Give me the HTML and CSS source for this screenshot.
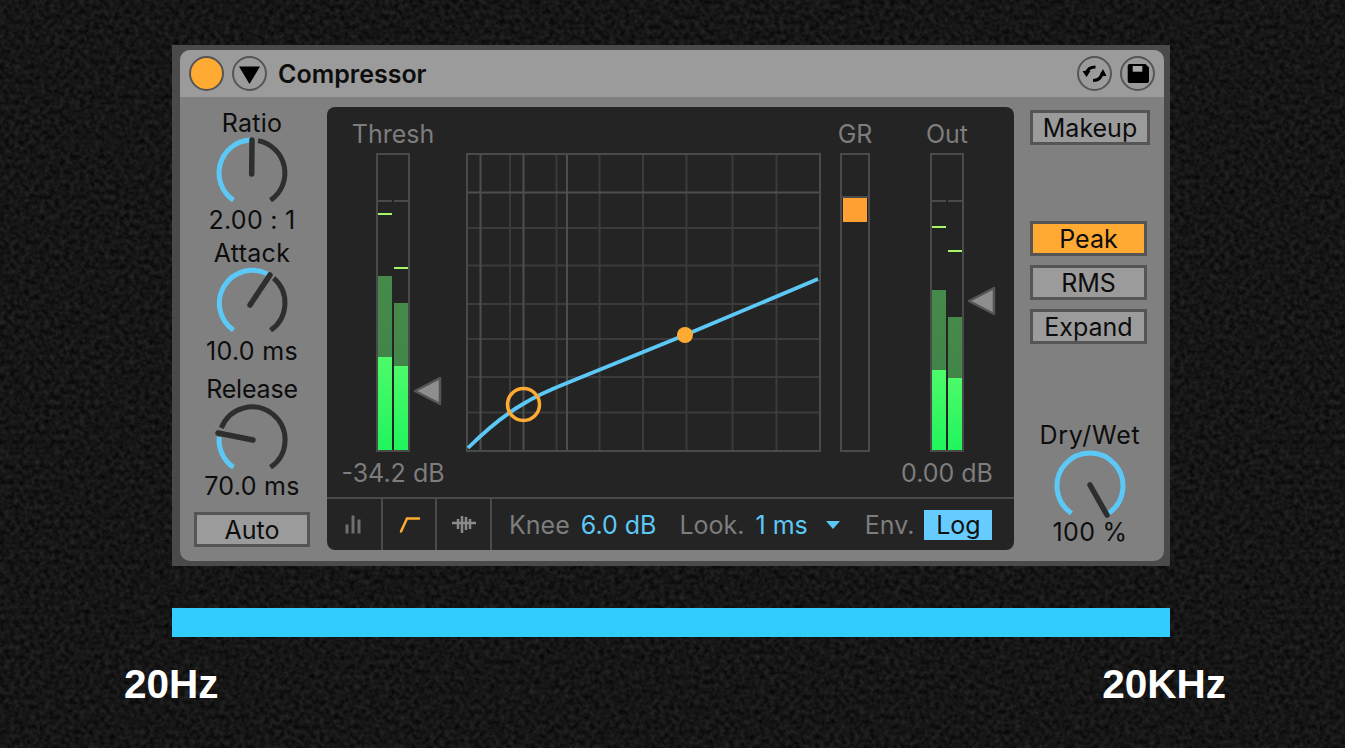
FILE: index.html
```html
<!DOCTYPE html>
<html lang="en">
<head>
<meta charset="utf-8">
<title>Compressor</title>
<link rel="stylesheet" href="styles.css">
</head>
<body>
<svg class="noise" width="1345" height="748" aria-hidden="true">
  <filter id="grain" x="0" y="0" width="100%" height="100%" color-interpolation-filters="sRGB">
    <feTurbulence type="fractalNoise" baseFrequency="0.2" numOctaves="2" seed="7"/>
    <feColorMatrix type="matrix" values="0.17 0 0 0 0  0.17 0 0 0 0  0.17 0 0 0 0  0 0 0 0 1"/>
  </filter>
  <rect width="1345" height="748" filter="url(#grain)"/>
</svg>

<main class="page">
  <section class="device">
    <div class="inner">
      <header class="titlebar">
        <span class="power"></span>
        <span class="round-btn">
          <svg viewBox="0 0 31 31" width="31" height="31"><path d="M5 8.500H26L15.500 26Z" fill="#000"/></svg>
        </span>
        <h1 class="title">Compressor</h1>
        <span class="round-btn push">
          <svg viewBox="0 0 31 31" width="31" height="31" fill="none" stroke="#000" stroke-width="3">
            <path d="M7.500 15C8.500 11 11.500 9 16.500 9"/>
            <path d="M23.500 14C22.500 20 19 22.500 14 22.500"/>
            <path d="M3.500 13H11.500L7.500 19Z" fill="#000" stroke="none"/>
            <path d="M20.500 18H27.500L24 11Z" fill="#000" stroke="none"/>
          </svg>
        </span>
        <span class="round-btn">
          <svg viewBox="0 0 31 31" width="31" height="31"><path d="M5.700 8Q5.700 6 7.700 6H23.500L27 9.500V23Q27 25 25 25H7.700Q5.700 25 5.700 23Z" fill="#000"/><rect x="10.700" y="8" width="9.600" height="5.700" fill="#a8a8a8"/></svg>
        </span>
      </header>

      <div class="body">
        <aside class="left-col">
          <div class="knob-group first">
            <div class="dial-label">Ratio</div>
            <svg class="knob" viewBox="0 0 70 70" width="70" height="70">
              <path class="arc-on" d="M16.500 62.300A33 33 0 0 1 33 2.060"/>
              <path class="arc-off" d="M41 2.600A33 33 0 0 1 53.500 62.300"/>
              <path class="needle" d="M35 2L34.700 36"/>
            </svg>
            <div class="dial-value">2.00 : 1</div>
          </div>
          <div class="knob-group second">
            <div class="dial-label">Attack</div>
            <svg class="knob" viewBox="0 0 70 70" width="70" height="70">
              <path class="arc-on" d="M16.500 62.300A33 33 0 0 1 50.500 5.900"/>
              <path class="arc-off" d="M56.700 10.200A33 33 0 0 1 53.500 62.300"/>
              <path class="needle" d="M53 7L33 37"/>
            </svg>
            <div class="dial-value">10.0 ms</div>
          </div>
          <div class="knob-group third">
            <div class="dial-label">Release</div>
            <svg class="knob" viewBox="0 0 70 70" width="70" height="70">
              <path class="arc-on" d="M16.500 62.300A33 33 0 0 1 2.200 32"/>
              <path class="arc-off" d="M4.300 23A33 33 0 1 1 53.500 62.300"/>
              <path class="needle" d="M1 28L36 35"/>
            </svg>
            <div class="dial-value">70.0 ms</div>
          </div>
          <div class="toggle auto">Auto</div>
        </aside>

        <section class="panel">
          <div class="display">
            <div class="col col-thresh">
              <div class="col-label">Thresh</div>
              <div class="meter">
                <span class="zero"></span>
                <div class="channel"><span class="level" style="height:174px"><span class="hot" style="height:93px"></span></span></div>
                <div class="channel"><span class="level" style="height:147px"><span class="hot" style="height:84px"></span></span></div>
                <span class="hold hold-l" style="bottom:235px"></span>
                <span class="hold hold-r" style="bottom:181px"></span>
                <svg class="pointer pointer-thresh" viewBox="0 0 29 30" width="29" height="30"><path d="M2 15L27 2V28Z" fill="#8e8e8e" stroke="#555" stroke-width="2.500" stroke-linejoin="round"/></svg>
              </div>
              <div class="col-value">-34.2 dB</div>
            </div>

            <div class="col col-graph">
              <div class="col-label"></div>
              <svg class="graph" viewBox="0 0 355 299" width="355" height="299">
                <g class="grid-dim">
                  <path d="M44 0V299M90.500 0V299M133.500 0V299M177 0V299M220.500 0V299M266.500 0V299M310.500 0V299"/>
                  <path d="M0 75H355M0 112.500H355M0 151H355M0 186H355M0 224H355M0 259.500H355"/>
                </g>
                <path class="grid-mid" d="M14.500 0V299M57.500 0V299M101 0V299M0 39.500H355"/>
                <rect class="grid-frame" x="1" y="1" width="353" height="297"/>
                <path class="curve" d="M2 295C20 277 40 261 57 251C70 243 86 236 101 230L219 182L352 126"/>
                <circle class="ring" cx="57.500" cy="251.500" r="16"/>
                <circle class="dot" cx="219" cy="182" r="8"/>
              </svg>
              <div class="col-value"></div>
            </div>

            <div class="col col-gr">
              <div class="col-label">GR</div>
              <div class="gr-meter"><span class="gr-mark"></span><span class="gr-fill"></span></div>
              <div class="col-value"></div>
            </div>

            <div class="col col-out">
              <div class="col-label">Out</div>
              <div class="meter">
                <span class="zero"></span>
                <div class="channel"><span class="level" style="height:160px"><span class="hot" style="height:80px"></span></span></div>
                <div class="channel"><span class="level" style="height:133px"><span class="hot" style="height:72px"></span></span></div>
                <span class="hold hold-l" style="bottom:222px"></span>
                <span class="hold hold-r" style="bottom:198px"></span>
                <svg class="pointer pointer-out" viewBox="0 0 29 30" width="29" height="30"><path d="M2 15L27 2V28Z" fill="#8e8e8e" stroke="#555" stroke-width="2.500" stroke-linejoin="round"/></svg>
              </div>
              <div class="col-value">0.00 dB</div>
            </div>
          </div>

          <footer class="strip">
            <div class="tab">
              <svg viewBox="0 0 24 24" width="24" height="24" fill="#6f6f6f"><rect x="3.500" y="11.500" width="3" height="9"/><rect x="9.500" y="2.500" width="3" height="18"/><rect x="15.500" y="6.500" width="3" height="14"/></svg>
            </div>
            <div class="tab">
              <svg viewBox="0 0 24 24" width="24" height="24" fill="none" stroke="#ffaa33" stroke-width="2.500" stroke-linecap="round"><path d="M4 18.500L10 5.500H22"/></svg>
            </div>
            <div class="tab">
              <svg viewBox="0 0 28 24" width="28" height="24" fill="none" stroke="#8a8a8a" stroke-width="2.500"><path d="M2 10H26"/><path d="M8 6V16M12 3V20M16 4V17M20 6V16"/></svg>
            </div>
            <div class="params">
              <span class="p-name">Knee</span><span class="p-val knee">6.0 dB</span>
              <span class="p-name look">Look.</span><span class="p-val lookv">1 ms</span>
              <svg class="caret" viewBox="0 0 14 8" width="14" height="8"><path d="M0 0H14L7 8Z" fill="#5cc8f5"/></svg>
              <span class="p-name env">Env.</span><span class="log">Log</span>
            </div>
          </footer>
        </section>

        <aside class="right-col">
          <div class="toggle makeup">Makeup</div>
          <div class="modes">
            <div class="toggle mode on">Peak</div>
            <div class="toggle mode">RMS</div>
            <div class="toggle mode">Expand</div>
          </div>
          <div class="knob-group drywet">
            <div class="dial-label">Dry/Wet</div>
            <svg class="knob" viewBox="0 0 70 70" width="70" height="70">
              <path class="arc-on" d="M16.500 62.300A33 33 0 1 1 53.500 62.300"/>
              <path class="needle" d="M35 34L52 64"/>
            </svg>
            <div class="dial-value">100 %</div>
          </div>
        </aside>
      </div>
    </div>
  </section>

  <div class="range-bar"></div>
  <div class="range-labels"><span>20Hz</span><span>20KHz</span></div>
</main>
</body>
</html>
```
FILE: styles.css
```css
* { box-sizing: border-box; }
html { background: #141414; }
html, body { margin: 0; height: 748px; overflow: hidden; }
body { font-family: Inter, "Noto Sans", sans-serif; color: #111; }
.noise { position: absolute; left: 0; top: 0; z-index: -1; }

.page { padding: 45px 0 0 172px; }

.device { width: 998px; height: 521px; background: #4a4a4a; padding: 5px 6px 5px 8px; }
.inner { height: 511px; background: #808080; border-radius: 10px; display: flex; flex-direction: column; overflow: hidden; }

.titlebar { height: 47px; background: #9b9b9b; display: flex; align-items: center; padding: 0 9px; }
.power { width: 35px; height: 35px; border-radius: 50%; background: #ffaa33; border: 2px solid #555; }
.round-btn { width: 35px; height: 35px; border-radius: 50%; border: 2px solid #555; margin-left: 8px; flex: none; }
.round-btn svg { display: block; }
.round-btn.push { margin-left: auto; }
.title { margin: 0 0 0 11px; font-size: 25px; font-weight: 600; line-height: 32px; color: #0d0d0d; }

.body { flex: 1; display: flex; padding-top: 10px; }

.left-col { width: 147px; padding-right: 3px; display: flex; flex-direction: column; align-items: center; }
.knob-group { display: flex; flex-direction: column; align-items: center; }
.knob-group.first { margin-top: 4px; }
.knob-group.second { margin-top: 9px; }
.knob-group.second .dial-value { margin-top: 1px; }
.knob-group.third { margin-top: 14px; }
.knob-group.third .dial-label { margin-bottom: 4px; letter-spacing: -.2px; }
.knob-group.third .dial-value { margin-top: -1px; }
.dial-label, .dial-value { font-size: 25px; line-height: 24px; letter-spacing: .3px; white-space: nowrap; color: #0d0d0d; }
.dial-label { margin-bottom: 3px; }
.knob { display: block; overflow: visible; fill: none; }
.arc-on, .arc-off { fill: none; stroke-width: 5; }
.arc-on { stroke: #5cc8f5; }
.arc-off { stroke: #2e2e2e; }
.needle { fill: none; stroke: #2e2e2e; stroke-width: 5.500; stroke-linecap: round; }

.toggle { height: 35px; border: 3px solid #555; background: #9b9b9b; font-size: 25px; line-height: 31px; text-align: center; color: #0d0d0d; }
.auto { width: 116px; margin-top: 14px; }

.panel { width: 687px; height: 443px; background: #242424; border-radius: 8px; display: flex; flex-direction: column; overflow: hidden; flex: none; }
.display { height: 390px; display: flex; padding: 15px 0 0 14px; }
.col { display: flex; flex-direction: column; align-items: center; }
.col-label, .col-value { font-size: 25px; line-height: 24px; height: 24px; color: #7d7d7d; white-space: nowrap; }
.col-value { margin-top: 9px; }
.col-label { margin-bottom: 7px; }
.col-thresh { width: 104px; }
.col-graph { width: 355px; margin-left: 21px; }
.col-gr { width: 30px; margin-left: 19px; }
.col-out { width: 94px; margin-left: 30px; }

.meter { position: relative; width: 34px; height: 299px; border: 2px solid #4a4a4a; display: flex; gap: 2px; align-items: flex-end; flex: none; }
.channel { width: 14px; height: 100%; display: flex; flex-direction: column; justify-content: flex-end; }
.level { display: flex; flex-direction: column; justify-content: flex-end; background: linear-gradient(#468a4b, #3b7f45); }
.hot { display: block; background: linear-gradient(#4dfa6a, #20f55c); }
.zero { position: absolute; left: 0; right: 0; bottom: 248px; height: 2px; background: repeating-linear-gradient(90deg, #4a4a4a 0 14px, #242424 14px 16px); }
.hold { position: absolute; width: 14px; height: 2.500px; background: #a6f56a; }
.hold-l { left: 0; }
.hold-r { left: 16px; }
.pointer { position: absolute; display: block; }
.pointer-thresh { left: 35px; top: 221px; }
.pointer-out { left: 35px; top: 131px; }

.graph { display: block; flex: none; }
.grid-frame { fill: none; stroke: #4a4a4a; stroke-width: 2; }
.grid-dim path { fill: none; stroke: #3b3b3b; stroke-width: 2; }
.grid-mid { fill: none; stroke: #4e4e4e; stroke-width: 2; }
.curve { fill: none; stroke: #5cc8f5; stroke-width: 3.800; }
.ring { fill: none; stroke: #ffaa33; stroke-width: 3.500; }
.dot { fill: #ffaa33; }

.gr-meter { width: 30px; height: 299px; border: 2px solid #4a4a4a; display: flex; flex-direction: column; align-items: center; flex: none; }
.gr-mark { display: block; width: 100%; height: 2px; margin-top: 41px; background: #4a4a4a; }
.gr-fill { display: block; width: 24px; height: 24px; background: #ffa033; }

.strip { height: 53px; border-top: 2px solid #4a4a4a; display: flex; align-items: stretch; }
.tab { width: 55px; border-right: 2px solid #4a4a4a; display: flex; align-items: center; justify-content: center; flex: none; }
.tab:first-child { width: 56px; }
.tab:nth-child(2) { width: 54px; }
.params { flex: 1; display: flex; align-items: center; padding-left: 17px; font-size: 25px; white-space: nowrap; }
.p-name { color: #7d7d7d; }
.p-val { color: #5cc8f5; }
.knee { margin-left: 11px; }
.look { margin-left: 23px; }
.lookv { margin-left: 11px; }
.caret { margin-left: 18px; }
.env { margin-left: 25px; }
.log { margin-left: 10px; width: 68px; height: 30px; line-height: 30px; text-align: center; background: #66ccff; color: #111; }

.right-col { flex: 1; padding: 3px 0 0 16px; display: flex; flex-direction: column; }
.makeup { width: 120px; }
.modes { margin-top: 76px; display: flex; flex-direction: column; gap: 9px; }
.mode { width: 117px; }
.mode.on { background: #ffaa33; }
.drywet { width: 120px; margin-top: 79px; }
.drywet .dial-label { margin-bottom: 4px; letter-spacing: .8px; }
.drywet .dial-value { margin-top: -1px; }

.range-bar { width: 998px; height: 29px; margin-top: 42px; background: #33ccff; }
.range-labels { width: 1102px; margin: 24px 0 0 -48px; display: flex; justify-content: space-between; font-family: "Liberation Sans", Arial, sans-serif; font-weight: 700; font-size: 40.500px; line-height: 46px; color: #fff; }
```
